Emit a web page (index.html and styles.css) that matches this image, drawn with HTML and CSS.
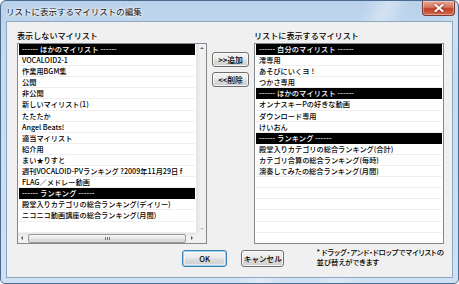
FILE: index.html
```html
<!DOCTYPE html>
<html lang="ja">
<head>
<meta charset="utf-8">
<title>リストに表示するマイリストの編集</title>
<link rel="stylesheet" href="styles.css">
</head>
<body>
<div class="window">
  <div class="titlebar">
    <span class="title">リストに表示するマイリストの編集</span>
    <div class="close">
      <svg width="10" height="8" viewBox="0 0 10 8"><path d="M1.5 1 L8.5 7 M8.5 1 L1.5 7" stroke="#fff" stroke-width="2" stroke-linecap="square"/></svg>
    </div>
  </div>
  <div class="client">
    <div class="panes">
      <section class="pane">
        <div class="label">表示しないマイリスト</div>
        <div class="listbox">
          <div class="view">
            <ul class="rows">
              <li class="hdr">------ ほかのマイリスト ------</li>
              <li>VOCALOID2-1</li>
              <li>作業用BGM集</li>
              <li>公開</li>
              <li>非公開</li>
              <li>新しいマイリスト(1)</li>
              <li>たたたか</li>
              <li>Angel Beats!</li>
              <li>適当マイリスト</li>
              <li>紹介用</li>
              <li>まい★りすと</li>
              <li>週刊VOCALOID-PVランキング ?2009年11月29日 f</li>
              <li>FLAG／メドレー動画</li>
              <li class="hdr">------ ランキング ------</li>
              <li>殿堂入りカテゴリの総合ランキング(デイリー)</li>
              <li>ニコニコ動画講座の総合ランキング(月間)</li>
              <li></li>
            </ul>
            <div class="vscroll">
              <span class="arr up"></span>
              <span class="arr down"></span>
            </div>
          </div>
          <div class="hbar">
            <div class="hscroll">
              <span class="arr left"></span>
              <div class="thumb"><span class="grip"></span></div>
              <span class="arr right"></span>
            </div>
            <div class="corner"></div>
          </div>
        </div>
      </section>
      <div class="mid">
        <button class="btn small">&gt;&gt;追加</button>
        <button class="btn small">&lt;&lt;削除</button>
      </div>
      <section class="pane">
        <div class="label">リストに表示するマイリスト</div>
        <div class="listbox">
          <ul class="rows full">
            <li class="hdr">------ 自分のマイリスト ------</li>
            <li>澪専用</li>
            <li>あそびにいくヨ！</li>
            <li>つかさ専用</li>
            <li class="hdr">------ ほかのマイリスト ------</li>
            <li>オンナスキーPの好きな動画</li>
            <li>ダウンロード専用</li>
            <li>けいおん</li>
            <li class="hdr">------ ランキング ------</li>
            <li>殿堂入りカテゴリの総合ランキング(合計)</li>
            <li>カテゴリ合算の総合ランキング(毎時)</li>
            <li>演奏してみたの総合ランキング(月間)</li>
            <li></li><li></li><li></li><li></li><li></li><li></li><li></li>
          </ul>
        </div>
      </section>
    </div>
    <div class="bottom">
      <button class="btn ok">OK</button>
      <button class="btn cancel">キャンセル</button>
      <p class="note">* ドラッグ・アンド・ドロップでマイリストの<br>並び替えができます</p>
    </div>
  </div>
</div>
</body>
</html>
```

FILE: styles.css
```css
* { box-sizing: border-box; }
html, body { margin: 0; padding: 0; background: #ffffff; width: 459px; height: 284px; }
body {
  font-family: "Noto Sans CJK JP", "Noto Sans", sans-serif;
  color: #000;
}
.window {
  width: 459px;
  height: 284px;
  border: 1px solid #4a6a8e;
  border-radius: 6px 6px 5px 5px;
  padding: 0 5px 5px 5px;
  display: flex;
  flex-direction: column;
  background:
    linear-gradient(115deg, rgba(255,255,255,0) 62%, rgba(255,255,255,0.35) 66%, rgba(255,255,255,0) 70%, rgba(255,255,255,0) 76%, rgba(255,255,255,0.3) 79%, rgba(255,255,255,0) 83%),
    linear-gradient(180deg, #b9d1ea 0%, #c6dbf0 20%, #cfe1f3 100%);
  overflow: hidden;
}
.titlebar {
  flex: 0 0 20px;
  height: 20px;
  display: flex;
  justify-content: space-between;
  align-items: flex-start;
  margin-right: -2px;
}
.title {
  font-size: 8.5px;
  line-height: 20px;
  color: #111;
  text-shadow: 0 0 4px #fff, 0 0 3px #fff, 0 0 2px #fff;
}
.close {
  width: 33px;
  height: 15px;
  border: 1px solid #7a3a33;
  border-top: none;
  border-radius: 0 0 4px 4px;
  background: linear-gradient(180deg, #e9a99a 0%, #d7755f 45%, #c2402b 55%, #d06a4d 100%);
  display: flex;
  align-items: center;
  justify-content: center;
  box-shadow: inset 0 0 0 1px rgba(255,255,255,0.35);
}
.close svg { display: block; filter: drop-shadow(0 0 1px #6a1d10); }
.client {
  flex: 1 0 auto;
  border: 1px solid #8ea7c0;
  background: #f0f0f0;
  padding: 8px 8px 0 10px;
  display: flex;
  flex-direction: column;
}
.panes {
  flex: 0 0 auto;
  display: flex;
  gap: 5px;
}
.pane {
  width: 190px;
  display: flex;
  flex-direction: column;
}
.label {
  flex: 0 0 13px;
  font-size: 8.1px;
  line-height: 12px;
  height: 13px;
  white-space: nowrap;
  font-weight: 500;
}
.listbox {
  flex: 0 0 201px;
  height: 201px;
  border: 1px solid #828790;
  background: #fff;
  display: flex;
  flex-direction: column;
  overflow: hidden;
}
.view {
  flex: 1 1 auto;
  display: flex;
  min-height: 0;
}
.rows {
  list-style: none;
  margin: 0;
  padding: 0 1px;
  flex: 1;
  overflow: hidden;
}
.rows li {
  height: 11.1px;
  line-height: 10.4px;
  font-size: 7.2px;
  font-weight: 500;
  padding-left: 3px;
  border-bottom: 1px solid #efefef;
  white-space: nowrap;
  overflow: hidden;
}
.rows li.hdr {
  background: #000;
  color: #fff;
  border-bottom-color: #000;
  letter-spacing: 0.15px;
}
.vscroll {
  width: 10px;
  background: linear-gradient(90deg, #e3e3e3, #f2f2f2 40%, #f0f0f0);
  border-left: 1px solid #e8e8e8;
  display: flex;
  flex-direction: column;
  justify-content: space-between;
  align-items: center;
  padding: 3px 0;
}
.arr { display: block; width: 0; height: 0; }
.arr.up { border-left: 2px solid transparent; border-right: 2px solid transparent; border-bottom: 2px solid #6a6a6a; }
.arr.down { border-left: 2px solid transparent; border-right: 2px solid transparent; border-top: 2px solid #c0c0c0; }
.hbar {
  flex: 0 0 10px;
  height: 10px;
  display: flex;
}
.hscroll {
  flex: 1;
  background: linear-gradient(180deg, #e3e3e3, #f2f2f2 40%, #f0f0f0);
  display: flex;
  align-items: center;
  padding: 0 3px;
  gap: 4px;
}
.arr.left { border-top: 2px solid transparent; border-bottom: 2px solid transparent; border-right: 2px solid #555; }
.arr.right { border-top: 2px solid transparent; border-bottom: 2px solid transparent; border-left: 2px solid #555; }
.thumb {
  flex: 1;
  height: 9px;
  border: 1px solid #9a9a9a;
  border-radius: 2px;
  background: linear-gradient(180deg, #f5f5f5 0%, #e8e8e8 50%, #d8d8d8 51%, #dcdcdc 100%);
  display: flex;
  align-items: center;
  justify-content: center;
  margin: 0 1px;
}
.grip {
  width: 5px;
  height: 3px;
  background: repeating-linear-gradient(90deg, #777 0 1px, transparent 1px 2px);
}
.corner {
  width: 10px;
  background: #f0f0f0;
}
.mid {
  width: 37px;
  padding-top: 22px;
  display: flex;
  flex-direction: column;
  gap: 5px;
}
.btn {
  font-family: inherit;
  font-size: 7.6px;
  font-weight: 500;
  color: #000;
  padding: 0;
  border: 1px solid #707070;
  border-radius: 3px;
  background: linear-gradient(180deg, #f3f3f3 0%, #ebebeb 48%, #dddddd 52%, #cfcfcf 100%);
  box-shadow: inset 0 0 0 1px rgba(255,255,255,0.7);
  white-space: nowrap;
}
.btn.small {
  height: 15px;
  width: 37px;
  line-height: 13px;
  font-size: 7.8px;
}
.bottom {
  flex: 0 0 auto;
  display: flex;
  align-items: flex-start;
  padding: 6px 0 0 165px;
}
.ok, .cancel {
  height: 17px;
  line-height: 15px;
}
.ok {
  width: 50px;
  border-color: #3c7fb1;
  box-shadow: inset 0 0 0 1px #9fd3f5, inset 0 0 0 2px rgba(255,255,255,0.5);
}
.cancel {
  width: 48px;
  margin-left: 14px;
}
.note {
  margin: -3px 0 0 32px;
  font-size: 7.4px;
  font-weight: 500;
  line-height: 9.5px;
  white-space: nowrap;
  font-feature-settings: "palt";
}
```
